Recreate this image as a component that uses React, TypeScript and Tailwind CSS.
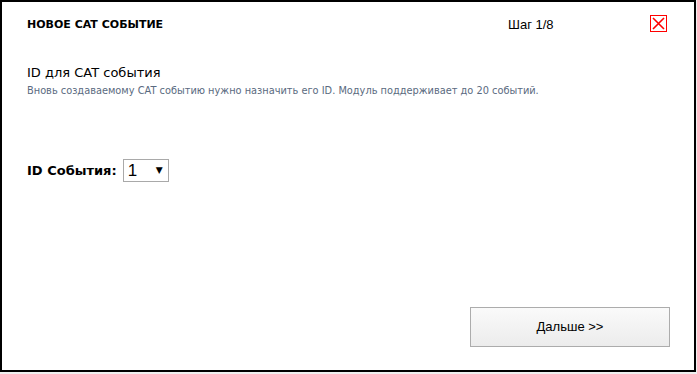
import React from 'react';

const App = () => {
  return (
    <div className="w-[697px] h-[374px] bg-[#efefef] overflow-hidden font-['DejaVu_Sans',sans-serif]">
      <div className="w-[696px] h-[372px] bg-white border-2 border-black flex flex-col">
        <div className="flex items-center h-[46px] pl-[25px] pr-[27px]">
          <div className="text-[11px] font-bold text-black w-[481px]">НОВОЕ CAT СОБЫТИЕ</div>
          <div className="text-[13px] text-black font-['Liberation_Sans',sans-serif] flex-1">Шаг 1/8</div>
          <svg width="17" height="17" viewBox="0 0 17 17" className="-mt-[3px]">
            <rect x="0.5" y="0.5" width="16" height="16" fill="none" stroke="#ff0000" />
            <path d="M3 3 L14 14 M14 3 L3 14" stroke="#ff0000" strokeWidth="1.6" />
          </svg>
        </div>
        <div className="pl-[25px] mt-[17px]">
          <div className="text-[13px] text-black leading-[16px]">ID для CAT события</div>
          <div className="text-[9.8px] text-[#5a6a80] leading-[14px] mt-[3px]">
            Вновь создаваемому CAT событию нужно назначить его ID. Модуль поддерживает до 20 событий.
          </div>
        </div>
        <div className="pl-[25px] mt-[61px] flex items-center">
          <span className="text-[13px] font-bold text-black">ID События:</span>
          <div className="ml-[6px] w-[46px] h-[23px] border border-[#a9a9a9] flex items-center justify-between pl-[4px] pr-[5px]">
            <span className="text-[17px] font-['Liberation_Sans',sans-serif] text-black leading-none">1</span>
            <span className="text-[9px] text-black">▼</span>
          </div>
        </div>
        <div className="flex-1" />
        <div className="flex justify-end pr-[24px] mb-[23px]">
          <button className="w-[200px] h-[40px] border border-[#acacac] bg-gradient-to-b from-[#fafafa] to-[#ececec] text-[13px] text-black font-['Liberation_Sans',sans-serif]">
            Дальше &gt;&gt;
          </button>
        </div>
      </div>
    </div>
  );
};

export default App;
